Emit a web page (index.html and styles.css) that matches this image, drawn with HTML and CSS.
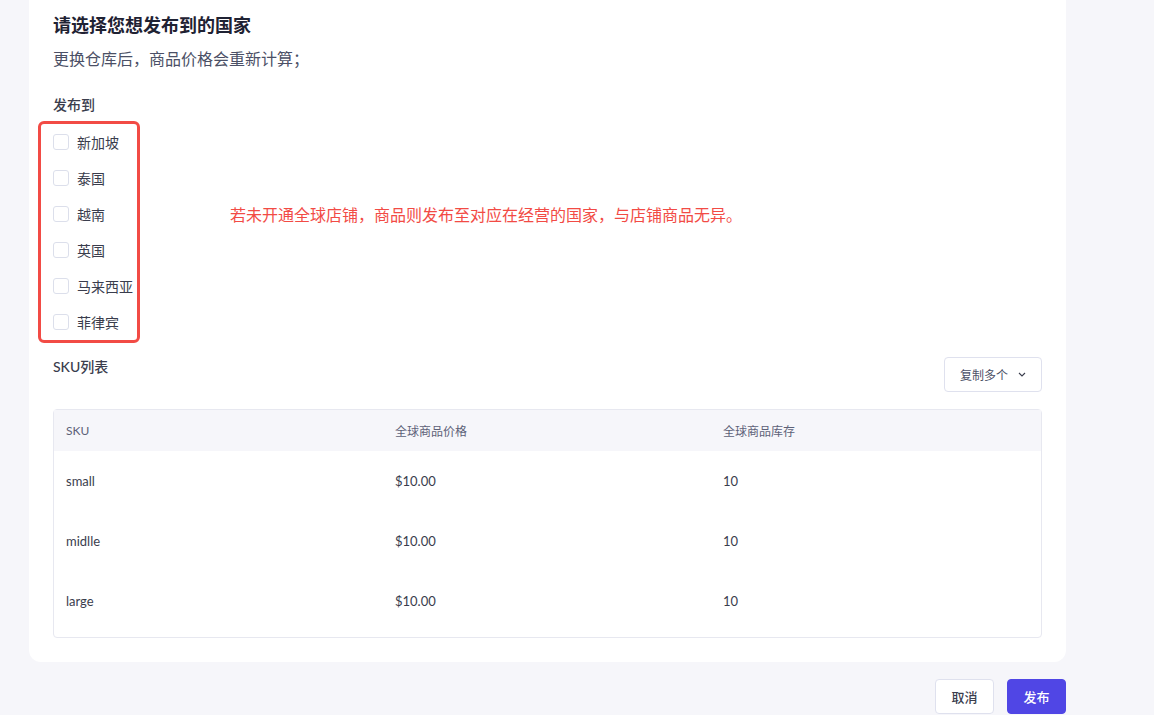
FILE: index.html
```html
<!DOCTYPE html>
<html lang="zh-CN">
<head>
    <meta charset="UTF-8">
    <title>发布到国家</title>
    <link rel="stylesheet" href="styles.css">
</head>
<body>
    <div class="page">
        <div class="card">
            <h1 class="title">请选择您想发布到的国家</h1>
            <p class="subtitle">更换仓库后，商品价格会重新计算；</p>

            <div class="field-label">发布到</div>
            <div class="publish-row">
                <div class="country-box">
                    <label class="country"><span class="check"></span>新加坡</label>
                    <label class="country"><span class="check"></span>泰国</label>
                    <label class="country"><span class="check"></span>越南</label>
                    <label class="country"><span class="check"></span>英国</label>
                    <label class="country"><span class="check"></span>马来西亚</label>
                    <label class="country"><span class="check"></span>菲律宾</label>
                </div>
                <p class="note">若未开通全球店铺，商品则发布至对应在经营的国家，与店铺商品无异。</p>
            </div>

            <div class="sku-head">
                <div class="field-label">SKU列表</div>
                <button class="copy-btn">复制多个
                    <svg width="8" height="5" viewBox="0 0 8 5"><path d="M1 1l3 3 3-3" fill="none" stroke="#3a3d4d" stroke-width="1.1"/></svg>
                </button>
            </div>

            <div class="sku-table">
                <div class="sku-row sku-row-head">
                    <span>SKU</span>
                    <span>全球商品价格</span>
                    <span>全球商品库存</span>
                </div>
                <div class="sku-row">
                    <span>small</span>
                    <span>$10.00</span>
                    <span>10</span>
                </div>
                <div class="sku-row">
                    <span>midlle</span>
                    <span>$10.00</span>
                    <span>10</span>
                </div>
                <div class="sku-row">
                    <span>large</span>
                    <span>$10.00</span>
                    <span>10</span>
                </div>
            </div>
        </div>

        <div class="actions">
            <button class="btn">取消</button>
            <button class="btn btn-primary">发布</button>
        </div>
    </div>
</body>
</html>
```

FILE: styles.css
```css
body {
    margin: 0;
    background: #f6f6fa;
    font-family: Lato, "Noto Sans CJK SC", sans-serif;
    color: #3a3d4d;
}
.page {
    width: 1037px;
    margin-left: 29px;
}
.card {
    background: #fff;
    border-radius: 0 0 12px 12px;
    padding: 13px 24px 24px 24px;
}
.title {
    margin: 0;
    font-size: 18px;
    line-height: 24px;
    font-weight: 600;
    color: #1f2233;
}
.subtitle {
    margin: 11px 0 0 0;
    font-size: 16px;
    line-height: 22px;
    color: #4b5066;
}
.field-label {
    font-size: 14px;
    line-height: 20px;
    font-weight: 500;
    color: #3a3d4d;
}
.subtitle + .field-label {
    margin-top: 25px;
}
.publish-row {
    display: flex;
    align-items: flex-start;
    margin-top: 6px;
    margin-left: -15px;
}
.country-box {
    width: 102px;
    box-sizing: border-box;
    border: 3px solid #f24b45;
    border-radius: 6px;
    padding: 0 0 0 12px;
    display: flex;
    flex-direction: column;
}
.country {
    display: flex;
    align-items: center;
    gap: 8px;
    height: 36px;
    font-size: 14px;
    color: #3a3d4d;
    white-space: nowrap;
}
.check {
    width: 14px;
    height: 14px;
    border: 1px solid #dcdfeb;
    border-radius: 3px;
    background: #fff;
}
.note {
    margin: 84px 0 0 90px;
    font-size: 16px;
    line-height: 20px;
    color: #f24b45;
}
.sku-head {
    display: flex;
    justify-content: space-between;
    align-items: flex-start;
    margin-top: 14px;
}
.copy-btn {
    display: flex;
    align-items: center;
    gap: 10px;
    height: 35px;
    padding: 0 15px;
    background: #fff;
    border: 1px solid #dfe1ee;
    border-radius: 4px;
    font-family: inherit;
    font-size: 12px;
    color: #4b5066;
}
.sku-table {
    margin-top: 17px;
    border: 1px solid #e7e8f0;
    border-radius: 4px;
    padding-bottom: 6px;
}
.sku-row {
    display: grid;
    grid-template-columns: 329px 328px 1fr;
    align-items: center;
    padding: 0 12px;
    height: 60px;
    font-size: 13px;
    color: #3a3d4d;
}
.sku-row-head {
    height: 41px;
    background: #f6f6fa;
    font-size: 12px;
    color: #5d6178;
}
.actions {
    display: flex;
    justify-content: flex-end;
    gap: 13px;
    margin-top: 17px;
}
.btn {
    width: 59px;
    height: 35px;
    border: 1px solid #dfe1ee;
    border-radius: 4px;
    background: #fff;
    font-family: inherit;
    font-size: 13px;
    font-weight: 500;
    color: #3a3d4d;
}
.btn-primary {
    background: #5046e5;
    border-color: #5046e5;
    color: #fff;
}
```
